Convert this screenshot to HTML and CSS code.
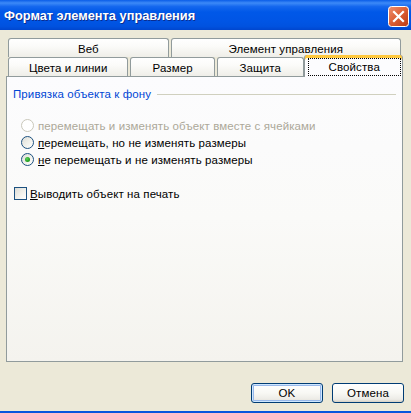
FILE: index.html
```html
<!DOCTYPE html>
<html>
<head>
<meta charset="utf-8">
<link rel="stylesheet" href="styles.css">
</head>
<body>
<div class="window">
  <div class="titlebar">
    <span class="title">Формат элемента управления</span>
    <svg class="close" width="21" height="21" viewBox="0 0 21 21">
      <defs>
        <linearGradient id="cg" x1="0" y1="0" x2="1" y2="1">
          <stop offset="0" stop-color="#EE9070"/>
          <stop offset="0.45" stop-color="#DE6238"/>
          <stop offset="1" stop-color="#BC3A12"/>
        </linearGradient>
      </defs>
      <rect x="0.5" y="0.5" width="20" height="20" rx="3" fill="url(#cg)" stroke="#FFFFFF" stroke-width="1"/>
      <path d="M6 6 L15 15 M15 6 L6 15" stroke="#FFFFFF" stroke-width="2.2" stroke-linecap="square" fill="none"/>
    </svg>
  </div>
  <div class="content">
    <div class="tabrow row1">
      <div class="tab w-web">Веб</div>
      <div class="tab w-ctrl">Элемент управления</div>
    </div>
    <div class="tabrow row2">
      <div class="tab w-colors">Цвета и линии</div>
      <div class="tab w-size">Размер</div>
      <div class="tab w-prot">Защита</div>
      <div class="tab selected w-props"><span class="focus">Свойства</span></div>
    </div>
    <div class="panel">
      <div class="group-head">
        <span class="group-label">Привязка объекта к фону</span>
        <span class="group-line"></span>
      </div>
      <div class="radios">
        <div class="opt disabled"><span class="radio"></span><span>перемещать и изменять объект вместе с ячейками</span></div>
        <div class="opt"><span class="radio"></span><span><u>п</u>еремещать, но не изменять размеры</span></div>
        <div class="opt"><span class="radio checked"><span class="dot"></span></span><span><u>н</u>е перемещать и не изменять размеры</span></div>
      </div>
      <div class="check-row"><span class="checkbox"></span><span><u>В</u>ыводить объект на печать</span></div>
    </div>
    <div class="buttons">
      <div class="btn default">OK</div>
      <div class="btn">Отмена</div>
    </div>
  </div>
  <div class="bottom-edge"></div>
</div>
</body>
</html>
```

FILE: styles.css
```css
html, body {
  margin: 0;
  padding: 0;
  background: #ECE9D8;
}
.window {
  width: 411px;
  height: 413px;
  display: flex;
  flex-direction: column;
  font-family: "Liberation Sans", Arial, sans-serif;
  font-size: 11.5px;
  letter-spacing: 0.1px;
  color: #000;
  overflow: hidden;
}
.titlebar {
  height: 30px;
  flex: none;
  display: flex;
  align-items: center;
  justify-content: space-between;
  padding: 0 2px 0 4px;
  box-sizing: border-box;
  background: linear-gradient(to bottom, #0A5DE8 0%, #3D8AF7 10%, #1467EE 22%, #0058E8 40%, #0055E5 70%, #0052DF 88%, #0046CE 100%);
}
.title {
  color: #fff;
  font-weight: bold;
  font-size: 12.8px;
  letter-spacing: 0;
  text-shadow: 1px 1px 0 #0B2C8E;
  margin-top: 1px;
}
.close {
  display: block;
  flex: none;
  margin-top: 2px;
}
.content {
  flex: 1;
  display: flex;
  flex-direction: column;
  padding: 8px 8px 0 6px;
}
.tabrow {
  display: flex;
  height: 19px;
  flex: none;
  padding-left: 2px;
}
.tab {
  box-sizing: border-box;
  height: 19px;
  border: 1px solid #919B9C;
  border-bottom: none;
  border-radius: 3px 3px 0 0;
  background: linear-gradient(to bottom, #FFFFFF 0%, #FBFBF9 40%, #EFEEE8 100%);
  display: flex;
  align-items: center;
  justify-content: center;
  padding-top: 1px;
  margin-right: 2px;
}
.w-web { width: 161px; }
.w-ctrl { width: 231px; }
.w-colors { width: 121px; }
.w-size { width: 85px; }
.w-prot { width: 87px; margin-right: 0; }
.w-props { width: 100px; }
.tab.selected {
  position: relative;
  height: 22px;
  margin-top: -2px;
  margin-bottom: -1px;
  margin-right: 0;
  border-top: none;
  background: #FCFCFE;
  box-shadow: inset 0 3px 0 #FFC83C, inset 0 1px 0 #E68B2C;
  z-index: 2;
  padding-top: 3px;
  align-items: stretch;
}
.focus {
  flex: 1;
  margin: 1px 2px 2px 4px;
  outline: 1px dotted #000;
  display: flex;
  align-items: center;
  justify-content: center;
}
.panel {
  box-sizing: border-box;
  height: 286px;
  flex: none;
  width: 397px;
  border: 1px solid #919B9C;
  background: linear-gradient(to bottom, #FCFCFE 0%, #FAFAF8 50%, #F4F3EE 100%);
  padding: 10px 6px 0 6px;
  position: relative;
  z-index: 1;
}
.group-head {
  display: flex;
  align-items: center;
  height: 14px;
}
.group-label {
  color: #0046D5;
  white-space: nowrap;
}
.group-line {
  flex: 1;
  height: 1px;
  background: #D0D0BF;
  margin: 1px 0 0 6px;
}
.radios {
  margin-top: 16px;
  padding-left: 8px;
}
.opt {
  height: 17px;
  display: flex;
  align-items: center;
  white-space: nowrap;
}
.opt.disabled { color: #ACA899; }
.radio {
  box-sizing: border-box;
  width: 13px;
  height: 13px;
  border-radius: 50%;
  border: 1px solid #1C5180;
  background: linear-gradient(135deg, #DCDCD7 0%, #F0F0EA 50%, #FFFFFF 100%);
  margin-right: 4px;
  display: flex;
  align-items: center;
  justify-content: center;
  flex: none;
}
.disabled .radio {
  border-color: #CAC8BB;
  background: #FFFFFF;
}
.dot {
  width: 5px;
  height: 5px;
  border-radius: 50%;
  background: radial-gradient(circle at 40% 35%, #5DD25D 0%, #21A121 60%, #1A8A1A 100%);
}
.check-row {
  margin-top: 17px;
  padding-left: 1px;
  height: 17px;
  display: flex;
  align-items: center;
}
.checkbox {
  box-sizing: border-box;
  width: 13px;
  height: 13px;
  border: 1px solid #1C5180;
  background: linear-gradient(135deg, #DCDCD7 0%, #F0F0EA 50%, #FFFFFF 100%);
  margin-right: 3px;
  flex: none;
}
.buttons {
  display: flex;
  justify-content: flex-end;
  gap: 9px;
  margin-top: 21px;
  margin-right: -1px;
}
.btn {
  box-sizing: border-box;
  width: 72px;
  height: 20px;
  border: 1px solid #003C74;
  border-radius: 3px;
  background: linear-gradient(to bottom, #FFFFFF 0%, #F8F8F4 50%, #ECEBE6 85%, #D6D0C5 100%);
  display: flex;
  align-items: center;
  justify-content: center;
}
.btn.default {
  box-shadow: inset 0 0 0 1px #CEE7FF, inset 0 0 0 2px #98B8EA;
}
.bottom-edge {
  height: 2px;
  flex: none;
  background: #0855DD;
}
```
